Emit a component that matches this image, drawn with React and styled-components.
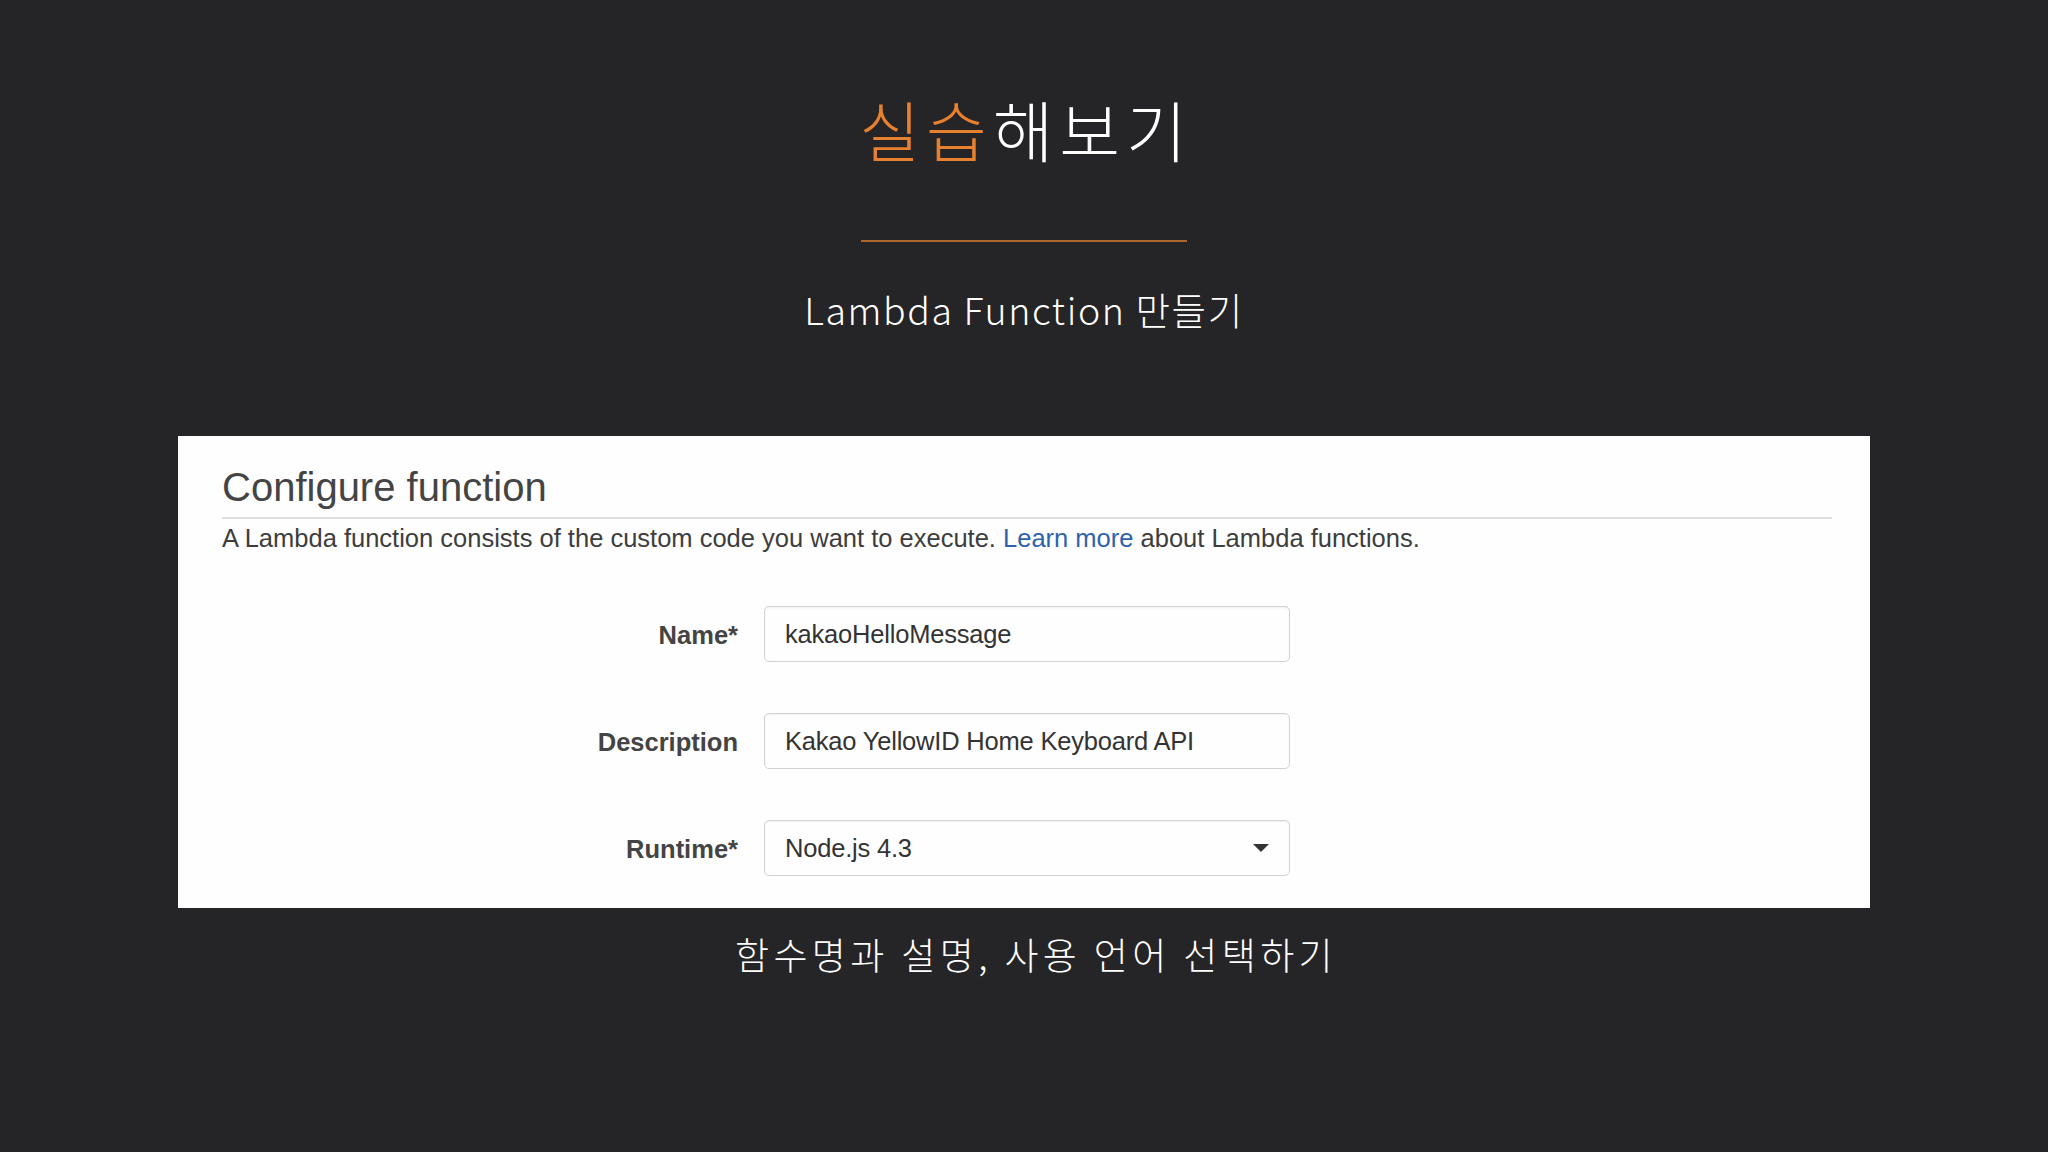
import React from "react";
import styled, { createGlobalStyle } from "styled-components";

const GlobalStyle = createGlobalStyle`
	html, body {
		margin: 0;
		padding: 0;
		background: #252426;
	}
	#root {
		min-height: 1152px;
	}
`;

const Slide = styled.div`
	width: 2048px;
	height: 1152px;
	box-sizing: border-box;
	padding-top: 92px;
	display: flex;
	flex-direction: column;
	align-items: center;
	background: #252426;
	font-family: "Noto Sans CJK KR", "Noto Sans", sans-serif;
	color: #ffffff;
`;

const Title = styled.h1`
	margin: 0;
	font-size: 66px;
	line-height: 72px;
	font-weight: 300;
	letter-spacing: 6px;
	padding-left: 4px;
	color: #ffffff;
`;

const Accent = styled.span`
	color: #e8812f;
`;

const Divider = styled.hr`
	width: 326px;
	height: 2px;
	margin: 76px 0 0;
	border: 0;
	background: #b0652b;
`;

const Subtitle = styled.h2`
	margin: 44px 0 0;
	font-size: 37.5px;
	line-height: 46px;
	font-weight: 300;
	letter-spacing: 1.6px;
`;

const Panel = styled.section`
	width: 1692px;
	height: 472px;
	box-sizing: border-box;
	margin-top: 104px;
	padding: 27px 38px 0 44px;
	background: #fefefe;
	font-family: "Liberation Sans", Arial, sans-serif;
	color: #444;
`;

const PanelTitle = styled.h3`
	margin: 0;
	font-size: 40px;
	line-height: 48px;
	font-weight: 400;
	color: #444;
`;

const Rule = styled.div`
	height: 2px;
	margin-top: 6px;
	background: #dedede;
`;

const Intro = styled.p`
	margin: 4px 0 0;
	font-size: 25.5px;
	line-height: 30px;
	color: #3d3d3d;
`;

const Link = styled.a`
	color: #2e62ad;
	text-decoration: none;
`;

const Form = styled.div`
	margin-top: 53px;
	display: flex;
	flex-direction: column;
	gap: 51px;
`;

const Row = styled.div`
	display: grid;
	grid-template-columns: 516px 526px;
	column-gap: 26px;
	align-items: center;
`;

const Label = styled.label`
	justify-self: end;
	padding-top: 3px;
	font-size: 25.5px;
	font-weight: 700;
	color: #444;
`;

const Field = styled.div`
	height: 56px;
	box-sizing: border-box;
	padding: 0 20px;
	display: flex;
	align-items: center;
	justify-content: space-between;
	border: 1.5px solid #d2d2d2;
	border-radius: 5px;
	box-shadow: inset 0 1px 2px rgba(0, 0, 0, 0.06);
	font-size: 25.5px;
	color: #333;
	letter-spacing: -0.2px;
`;

const Caret = styled.span`
	width: 0;
	height: 0;
	border-left: 8px solid transparent;
	border-right: 8px solid transparent;
	border-top: 8px solid #333;
`;

const Caption = styled.p`
	margin: 23px 0 0;
	padding-left: 24px;
	font-size: 37px;
	line-height: 46px;
	font-weight: 300;
	letter-spacing: 4.4px;
`;

const fields = [
	{ label: "Name*", value: "kakaoHelloMessage" },
	{ label: "Description", value: "Kakao YellowID Home Keyboard API" },
	{ label: "Runtime*", value: "Node.js 4.3", select: true },
];

export default function App() {
	return (
		<>
			<GlobalStyle />
			<Slide>
				<Title>
					<Accent>실습</Accent>해보기
				</Title>
				<Divider />
				<Subtitle>Lambda Function 만들기</Subtitle>
				<Panel>
					<PanelTitle>Configure function</PanelTitle>
					<Rule />
					<Intro>
						A Lambda function consists of the custom code you want to execute.{" "}
						<Link href="#">Learn more</Link> about Lambda functions.
					</Intro>
					<Form>
						{fields.map((f) => (
							<Row key={f.label}>
								<Label>{f.label}</Label>
								<Field>
									<span>{f.value}</span>
									{f.select && <Caret />}
								</Field>
							</Row>
						))}
					</Form>
				</Panel>
				<Caption>함수명과 설명, 사용 언어 선택하기</Caption>
			</Slide>
		</>
	);
}
